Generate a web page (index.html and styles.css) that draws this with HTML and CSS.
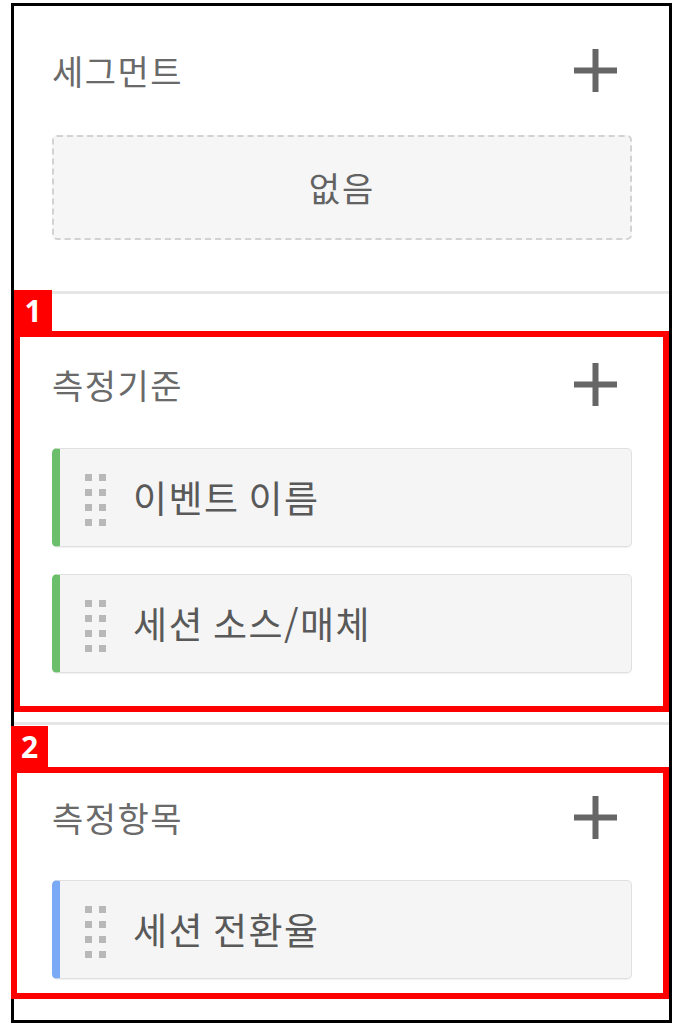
FILE: index.html
```html
<!DOCTYPE html>
<html lang="ko">
<head>
<meta charset="utf-8">
<title>탐색 설정</title>
<link rel="stylesheet" href="styles.css">
</head>
<body>
<div class="frame">
  <section class="sec sec-first">
    <div class="hdr">
      <span class="title">세그먼트</span>
      <svg class="plus" viewBox="0 0 45 45" width="45" height="45"><path d="M22.5 1v43M1 22.5h43" /></svg>
    </div>
    <div class="empty">없음</div>
  </section>
  <div class="divider"></div>
  <div class="badge badge-1">1</div>
  <div class="annot annot-1">
    <div class="hdr">
      <span class="title">측정기준</span>
      <svg class="plus" viewBox="0 0 45 45" width="45" height="45"><path d="M22.5 1v43M1 22.5h43" /></svg>
    </div>
    <div class="chips">
      <div class="chip chip-dim"><span class="handle"><i></i><i></i><i></i><i></i><i></i><i></i><i></i><i></i></span><span class="label">이벤트 이름</span></div>
      <div class="chip chip-dim"><span class="handle"><i></i><i></i><i></i><i></i><i></i><i></i><i></i><i></i></span><span class="label">세션 소스/매체</span></div>
    </div>
  </div>
  <div class="divider divider-2"></div>
  <div class="badge badge-2">2</div>
  <div class="annot annot-2">
    <div class="hdr">
      <span class="title">측정항목</span>
      <svg class="plus" viewBox="0 0 45 45" width="45" height="45"><path d="M22.5 1v43M1 22.5h43" /></svg>
    </div>
    <div class="chips">
      <div class="chip chip-metric"><span class="handle"><i></i><i></i><i></i><i></i><i></i><i></i><i></i><i></i></span><span class="label">세션 전환율</span></div>
    </div>
  </div>
</div>
</body>
</html>
```

FILE: styles.css
```css
html, body {
  margin: 0;
  padding: 0;
  background: #fff;
}

body {
  font-family: "Noto Sans CJK KR", "Noto Sans", sans-serif;
}

.frame {
  box-sizing: border-box;
  width: 661px;
  height: 1020px;
  margin: 3px 0 0 11px;
  border: 3px solid #000;
  background: #fff;
}

.sec-first {
  padding: 42px 37px 51px 38px;
}

.hdr {
  display: flex;
  align-items: center;
  justify-content: space-between;
  height: 45px;
}

.title {
  font-size: 34px;
  line-height: 1;
  letter-spacing: 1.5px;
  color: #6a6a6a;
  font-weight: 400;
}

.plus {
  margin-right: 14px;
  display: block;
}

.plus path {
  stroke: #666;
  stroke-width: 6;
  fill: none;
}

.empty {
  box-sizing: border-box;
  margin-top: 42px;
  height: 105px;
  border: 2px dashed #d2d2d2;
  border-radius: 5px;
  background: #f6f6f6;
  display: flex;
  align-items: center;
  justify-content: center;
  font-size: 34px;
  letter-spacing: 2px;
  color: #626262;
}

.divider {
  height: 3px;
  background: #e6e6e6;
}

.divider-2 {
  margin-top: 10px;
}

.badge {
  width: 38px;
  height: 41px;
  background: #ff0000;
  color: #fff;
  font-family: "Noto Sans", "Liberation Sans", sans-serif;
  font-weight: 700;
  font-size: 30px;
  line-height: 41px;
  text-align: center;
}

.badge-1 {
  margin-top: -4px;
}

.badge-2 {
  margin-top: 1px;
  margin-left: -3px;
  width: 37px;
}

.annot {
  border: 6px solid #ff0000;
}

.annot-1 {
  padding: 25px 31px 33px 32px;
}

.annot-2 {
  margin-left: -3px;
  padding: 22px 31px 14px 35px;
}

.annot-1 .chips {
  margin-top: 41px;
}

.annot-2 .chips {
  margin-top: 40px;
}

.chips {
  display: flex;
  flex-direction: column;
  gap: 27px;
}

.chip {
  box-sizing: border-box;
  height: 99px;
  display: flex;
  align-items: center;
  padding-left: 25px;
  background: #f5f5f5;
  border: 1px solid #e0e0e0;
  border-left: 8px solid #6bbf6b;
  border-radius: 5px;
  box-shadow: 0 1px 1px rgba(0, 0, 0, 0.06);
}

.chip-metric {
  border-left-color: #7aa9f6;
}

.handle {
  display: grid;
  grid-template-columns: 7px 7px;
  grid-auto-rows: 7px;
  column-gap: 7px;
  row-gap: 8px;
  margin-top: 4px;
}

.handle i {
  display: block;
  background: #b8b8b8;
}

.label {
  margin-left: 27px;
  font-size: 37px;
  line-height: 1;
  letter-spacing: 1.5px;
  word-spacing: -3px;
  color: #595959;
}
```
